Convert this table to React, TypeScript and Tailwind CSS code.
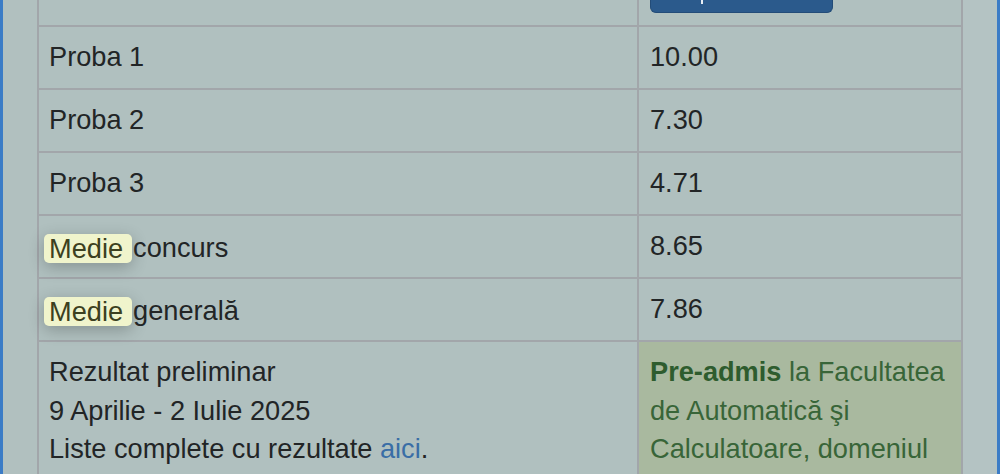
import React from "react";

const rows = [
  { label: "Proba 1", value: "10.00" },
  { label: "Proba 2", value: "7.30" },
  { label: "Proba 3", value: "4.71" },
  { label: "concurs", value: "8.65", medie: true },
  { label: "generală", value: "7.86", medie: true },
];

function Medie() {
  return (
    <span className="inline-block align-middle h-[29px] leading-[29px] rounded-[5px] bg-[#f0f4cc] text-[#3c4020] pl-[5px] pr-[9px] -ml-[5px] mr-[1px] shadow-[0_4px_16px_rgba(0,0,0,0.24)]">
      Medie
    </span>
  );
}

export default function App() {
  return (
    <div
      className="h-[474px] w-[1000px] overflow-hidden flex bg-[#b0c0bf] text-[#222526]"
      style={{ fontFamily: '"Liberation Sans", Arial, sans-serif' }}
    >
      <div className="w-[3px] bg-[#3b7cc6] shrink-0" />
      <div className="w-[34px] shrink-0 bg-[#b1c0bf]" />
      <div className="w-[926px] shrink-0 border-x-2 border-[#a2a6aa] text-[27.2px] leading-[38.5px]">
        <div className="flex h-[27px] border-b-2 border-[#a2a6aa]">
          <div className="w-[600px] border-r-2 border-[#a2a6aa]" />
          <div className="flex-1 pl-[11px]">
            <div className="relative h-[13px] w-[183px] rounded-b-[6px] bg-[#2b5a8c] border border-t-0 border-[#234c78]">
              <div className="absolute left-[50px] top-0 h-[4px] w-[2px] bg-[#e8eef5]" />
            </div>
          </div>
        </div>
        {rows.map((r) => (
          <div key={r.label} className="flex h-[63px] border-b-2 border-[#a2a6aa]">
            <div className="w-[600px] border-r-2 border-[#a2a6aa] flex items-center pl-[10px]">
              {r.medie ? (
                <span className="flex items-center pt-[3px]">
                  <Medie />
                  <span>{r.label}</span>
                </span>
              ) : (
                r.label
              )}
            </div>
            <div className="flex-1 flex items-center pl-[11px]">{r.value}</div>
          </div>
        ))}
        <div className="flex h-[200px]">
          <div className="w-[600px] border-r-2 border-[#a2a6aa] pl-[10px] pt-[11px]">
            <div>Rezultat preliminar</div>
            <div>9 Aprilie - 2 Iulie 2025</div>
            <div>
              Liste complete cu rezultate <span className="text-[#3a6ea6]">aici</span>.
            </div>
          </div>
          <div className="flex-1 bg-[#a9b99f] pl-[11px] pt-[11px] pr-[6px] text-[#386538]">
            <span className="font-bold text-[#2e5c2e]">Pre-admis</span> la Facultatea de Automatică şi Calculatoare, domeniul
          </div>
        </div>
      </div>
      <div className="w-[34px] shrink-0 bg-[#b4c3c3]" />
      <div className="w-[3px] bg-[#3b7cc6] shrink-0" />
    </div>
  );
}
